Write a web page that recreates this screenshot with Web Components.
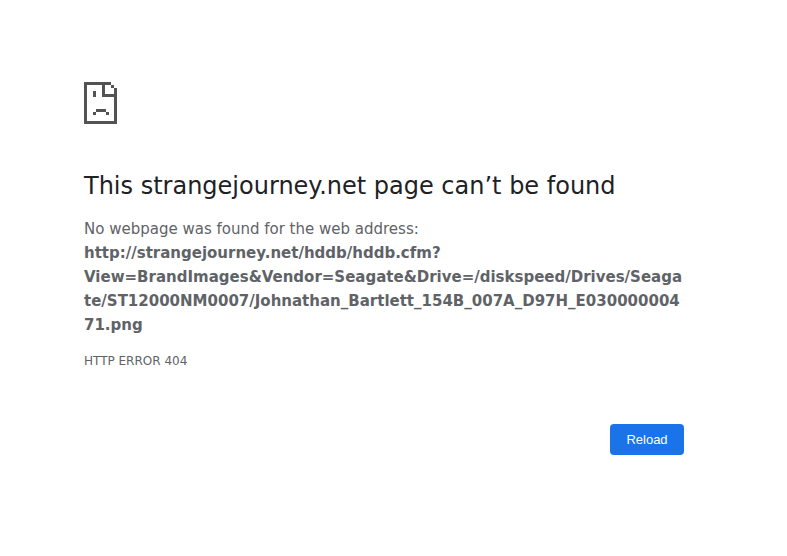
<!DOCTYPE html>
<html lang="en">
<head>
<meta charset="utf-8">
<title>strangejourney.net</title>
<style>
body { margin: 0; background: #fff; color: #5f6368; font: 15px/24px "DejaVu Sans", sans-serif; }
</style>
</head>
<body>
<error-page>
  <sad-page-icon slot="icon"></sad-page-icon>
  <span slot="heading">This strangejourney.net page can’t be found</span>
  <error-summary slot="summary" address="http://strangejourney.net/hddb/hddb.cfm?View=BrandImages&amp;Vendor=Seagate&amp;Drive=/diskspeed/Drives/Seagate/ST12000NM0007/Johnathan_Bartlett_154B_007A_D97H_E03000000471.png">No webpage was found for the web address:</error-summary>
  <span slot="code">HTTP ERROR 404</span>
  <action-button slot="actions">Reload</action-button>
</error-page>
<script>
function define(name, html, setup) {
  customElements.define(name, class extends HTMLElement {
    constructor() {
      super();
      const template = document.createElement('template');
      template.innerHTML = html;
      this.attachShadow({ mode: 'open' }).append(template.content.cloneNode(true));
    }
    connectedCallback() { if (setup) setup(this); }
  });
}

define('sad-page-icon', `
<style>:host { display: block; width: 33px; height: 42px; } svg { display: block; }</style>
<svg width="33" height="42" viewBox="0 0 33 42" fill="#535353" shape-rendering="crispEdges" aria-hidden="true">
  <path fill-rule="evenodd" d="M0 0H27V3H30V6H33V42H0ZM3 3V39H30V15H18V3ZM21 3V12H30V6H27V3Z"/>
  <path d="M9 9H12V15H9ZM12 27H22V30H25V33H22V30H12V33H9V30H12Z"/>
</svg>`);

define('error-summary', `
<style>:host { display: block; } p { margin: 0; } strong { display: block; font-weight: 700; overflow-wrap: anywhere; }</style>
<p><slot></slot><strong></strong></p>`, el => {
  el.shadowRoot.querySelector('strong').textContent = el.getAttribute('address');
});

define('action-button', `
<style>
:host { display: block; }
button { display: block; box-sizing: border-box; width: 74px; height: 31px; margin: 0; padding: 0; border: 0; border-radius: 4px; background: #1a73e8; color: #fff; font: 13px/15px "Liberation Sans", Arial, sans-serif; }
</style>
<button type="button"><slot></slot></button>`);

define('error-page', `
<style>
:host { display: block; box-sizing: border-box; width: 600px; margin: 0 0 0 84px; padding-top: 82px; }
h1 { margin: 48px 0 16px; color: #202124; font-size: 24px; line-height: 29px; font-weight: 400; }
.code { margin-top: 12px; font-size: 12px; line-height: 24px; }
.actions { display: flex; justify-content: flex-end; margin-top: 51px; }
</style>
<slot name="icon"></slot>
<h1><slot name="heading"></slot></h1>
<slot name="summary"></slot>
<div class="code"><slot name="code"></slot></div>
<div class="actions"><slot name="actions"></slot></div>`);
</script>
</body>
</html>
